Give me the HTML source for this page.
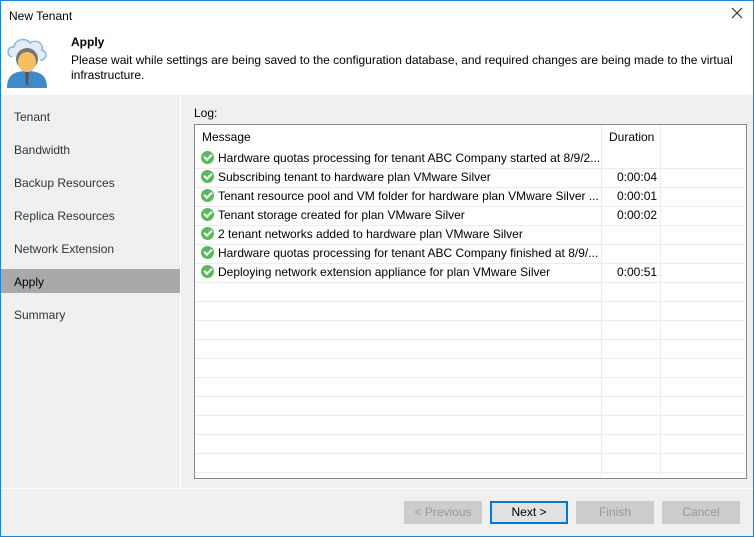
<!DOCTYPE html><html><head><style>
*{margin:0;padding:0;box-sizing:border-box}
body{width:754px;height:537px;font-family:"Liberation Sans",sans-serif;font-size:12px;color:#000;background:#f0f0f0;position:relative;overflow:hidden}
.win{position:absolute;left:0;top:0;width:754px;height:537px;border:1px solid #1883d7;}
.abs{position:absolute}
.nav{position:absolute;left:14px;font-size:12px;color:#333}
.row{position:absolute;left:201px;height:19px;line-height:19px;width:540px;white-space:nowrap}
.ck{display:inline-block;width:13px;height:13px;border-radius:50%;background:#5cb85c;vertical-align:-2px;margin-right:4px;position:relative}
.ck:after{content:"";position:absolute;left:3px;top:3px;width:6px;height:3px;border-left:2px solid #fff;border-bottom:2px solid #fff;transform:rotate(-45deg)}
.dur{position:absolute;left:416px;width:39px;text-align:right}
.btn{position:absolute;top:501px;width:78px;height:23px;border:1px solid #ccc;background:#ccc;color:#999;text-align:center;line-height:21px}
.hl{position:absolute;left:195px;width:550px;height:1px;background:#ececec}
</style></head><body>
<div class="abs" style="left:0;top:0;width:754px;height:95px;background:#fff"></div>
<div class="abs" style="left:9px;top:9px;font-size:12px">New Tenant</div>
<svg class="abs" style="left:731px;top:7px" width="12" height="12" viewBox="0 0 12 12"><path d="M1 1L11 11M11 1L1 11" stroke="#333" stroke-width="1.2"/></svg>
<svg class="abs" style="left:6px;top:34px" width="42" height="56" viewBox="0 0 42 54">
<path d="M6 22 C0 20 1 11 8 12 C9 4 20 2 24 8 C30 4 38 8 36 15 C43 17 40 26 34 25" fill="#e3ecf6" stroke="#8db4da" stroke-width="1.5"/>
<path d="M1 53 C1 40 8 36 21 36 C34 36 41 40 41 53Z" fill="#3f8bc9"/>
<path d="M19 36 L23 36 L22 50 L20 50Z" fill="#555"/>
<circle cx="21" cy="24" r="11" fill="#777"/>
<ellipse cx="21" cy="27" rx="9" ry="10" fill="#f5c062"/>
</svg>
<div class="abs" style="left:71px;top:35px;font-weight:bold">Apply</div>
<div class="abs" style="left:71px;top:53px;width:670px;line-height:15px">Please wait while settings are being saved to the configuration database, and required changes are being made to the virtual infrastructure.</div>
<div class="abs" style="left:180px;top:95px;width:1px;height:393px;background:#fff"></div>
<div class="nav" style="top:110px">Tenant</div>
<div class="nav" style="top:143px">Bandwidth</div>
<div class="nav" style="top:176px">Backup Resources</div>
<div class="nav" style="top:209px">Replica Resources</div>
<div class="nav" style="top:242px">Network Extension</div>
<div class="abs" style="left:1px;top:269px;width:179px;height:24px;background:#a9a9a9"></div>
<div class="nav" style="top:275px;color:#000">Apply</div>
<div class="nav" style="top:308px">Summary</div>
<div class="abs" style="left:194px;top:106px">Log:</div>
<div class="abs" style="left:194px;top:124px;width:553px;height:355px;background:#fff;border:1px solid #828790"></div>
<div class="abs" style="left:601px;top:125px;width:1px;height:353px;background:#e8eef6"></div>
<div class="abs" style="left:660px;top:125px;width:1px;height:353px;background:#e8eef6"></div>
<div class="abs" style="left:202px;top:130px">Message</div>
<div class="abs" style="left:609px;top:130px">Duration</div>
<div class="hl" style="top:168px"></div><div class="hl" style="top:187px"></div><div class="hl" style="top:206px"></div><div class="hl" style="top:225px"></div><div class="hl" style="top:244px"></div><div class="hl" style="top:263px"></div><div class="hl" style="top:282px"></div><div class="hl" style="top:301px"></div><div class="hl" style="top:320px"></div><div class="hl" style="top:339px"></div><div class="hl" style="top:358px"></div><div class="hl" style="top:377px"></div><div class="hl" style="top:396px"></div><div class="hl" style="top:415px"></div><div class="hl" style="top:434px"></div><div class="hl" style="top:453px"></div><div class="hl" style="top:472px"></div>
<div class="row" style="top:149px"><span class="ck"></span>Hardware quotas processing for tenant ABC Company started at 8/9/2...</div>
<div class="row" style="top:168px"><span class="ck"></span>Subscribing tenant to hardware plan VMware Silver<span class="dur">0:00:04</span></div>
<div class="row" style="top:187px"><span class="ck"></span>Tenant resource pool and VM folder for hardware plan VMware Silver ...<span class="dur">0:00:01</span></div>
<div class="row" style="top:206px"><span class="ck"></span>Tenant storage created for plan VMware Silver<span class="dur">0:00:02</span></div>
<div class="row" style="top:225px"><span class="ck"></span>2 tenant networks added to hardware plan VMware Silver</div>
<div class="row" style="top:244px"><span class="ck"></span>Hardware quotas processing for tenant ABC Company finished at 8/9/...</div>
<div class="row" style="top:263px"><span class="ck"></span>Deploying network extension appliance for plan VMware Silver<span class="dur">0:00:51</span></div>
<div class="abs" style="left:1px;top:488px;width:752px;height:1px;background:#fff"></div>
<div class="btn" style="left:404px">&lt; Previous</div>
<div class="btn" style="left:490px;border:2px solid #0078d7;background:#e1e1e1;color:#000;line-height:19px">Next &gt;</div>
<div class="btn" style="left:576px">Finish</div>
<div class="btn" style="left:662px">Cancel</div>
<div class="win"></div>
</body></html>
